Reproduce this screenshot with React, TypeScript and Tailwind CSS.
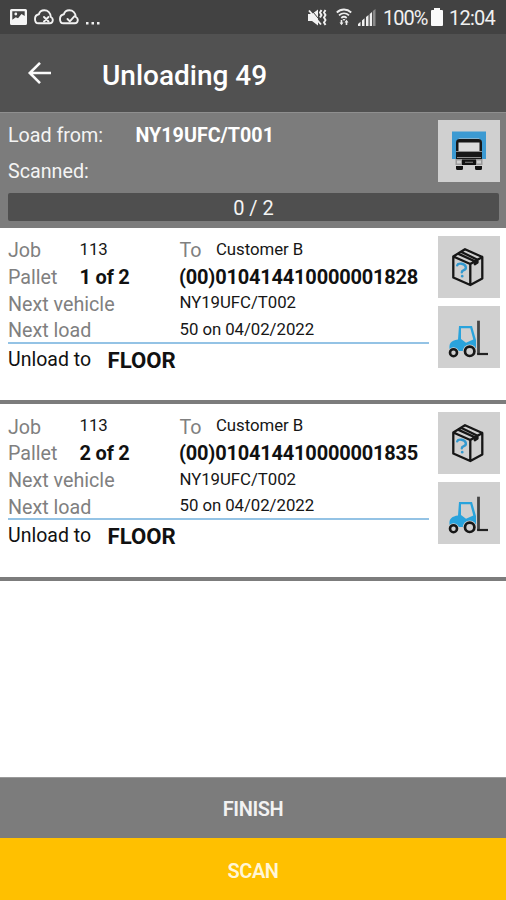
import type { ReactNode } from "react";

type Pallet = { job: string; index: string; customer: string; sscc: string; vehicle: string; load: string; target: string };

const pallets: Pallet[] = [
  { job: "113", index: "1 of 2", customer: "Customer B", sscc: "(00)010414410000001828", vehicle: "NY19UFC/T002", load: "50 on 04/02/2022", target: "FLOOR" },
  { job: "113", index: "2 of 2", customer: "Customer B", sscc: "(00)010414410000001835", vehicle: "NY19UFC/T002", load: "50 on 04/02/2022", target: "FLOOR" },
];

function CloudIcon({ mark }: { mark: string }) {
  return (
    <svg width="20" height="16" viewBox="0 0 20 16" fill="none" stroke="#f2f2f2" strokeWidth="1.900" strokeLinecap="round" strokeLinejoin="round">
      <path d="M4.300 14.300h11.500a3.300 3.300 0 0 0 1-6.300C16.500 4.200 14 1.300 10.300 1.300 7.500 1.300 5.500 2.900 4.900 5.300 2.600 5.700 1 7.600 1 9.900c0 2.500 1.300 4.400 3.300 4.400z" />
      <path d={mark} />
    </svg>
  );
}

function StatusBar() {
  return (
    <div className="flex h-[34px] shrink-0 items-center bg-[#424242] pl-[10px] pr-[11px] text-[#f0f0f0]">
      <svg width="17" height="16" viewBox="0 0 17 16">
        <path fill="#f5f5f5" fillRule="evenodd" d="M1.500 0h14A1.500 1.500 0 0 1 17 1.500v13a1.500 1.500 0 0 1-1.500 1.500h-14A1.500 1.500 0 0 1 0 14.500v-13A1.500 1.500 0 0 1 1.500 0zM2.300 2.300v8.500l3.500-2.500 2.200 1L11.500 5l3.200 2V2.300z" />
        <circle cx="5.800" cy="5" r="1.400" fill="#f5f5f5" />
      </svg>
      <div className="ml-[7px] flex gap-[5px]">
        <CloudIcon mark="M10 8l4.500 4.500M14.500 8l-4.500 4.500" />
        <CloudIcon mark="M8.500 10l2.300 2.300 4.500-5" />
      </div>
      <svg className="ml-[6px]" width="16" height="16" viewBox="0 0 16 16" fill="#f0f0f0">
        <rect x="1" y="13" width="2.500" height="2.500" />
        <rect x="6.500" y="13" width="2.500" height="2.500" />
        <rect x="12" y="13" width="2.500" height="2.500" />
      </svg>
      <svg className="ml-auto" width="19" height="17" viewBox="0 0 19 17">
        <path fill="#f2f2f2" d="M0 5h4l6-4.500v16L4 12H0z" />
        <path stroke="#424242" strokeWidth="1" d="M3 .5l11.500 14" />
        <path fill="none" stroke="#f2f2f2" strokeWidth="1.900" d="M1 1.500l12 14M13.500 1l-1.500 2.500 1.500 2.500-1.500 2.500M17.500 1l-1.500 2.500 1.500 2.500-1.500 2.500 1.500 2.500-1.500 2.500 1.500 2.500" />
      </svg>
      <svg className="ml-[9px]" width="16" height="18" viewBox="0 0 16 18">
        <path fill="none" stroke="#ededed" strokeWidth="1.800" d="M.8 4.500C5 .5 11 .5 15.200 4.500M3 7.300c3-2.700 7-2.700 10 0M5.300 10c1.700-1.500 3.700-1.500 5.400 0" />
        <path fill="#ededed" d="M6.500 11h3L8 13zM3.500 14.500h1.200V12h1.600v2.500h1.200l-2 2.800zM8.500 14.500l2-2.800 2 2.800h-1.200V17H9.700v-2.500z" />
      </svg>
      <svg className="ml-[6px]" width="18" height="17" viewBox="0 0 18 17" fill="#f0f0f0">
        <path d="M0 17v-2l2.500-2.200V17zM4 17v-5.500l2.500-2.300V17zM8 17V8l2.500-2v11zM11.700 17V5l2.300-2v14z" />
        <path fill="#8a8a8a" d="M14.800 17V2L17.500 0v17z" />
      </svg>
      <span className="ml-[7px] w-[44px] whitespace-nowrap pt-px text-[20px] leading-none tracking-[-0.950px]">100%</span>
      <svg className="ml-[4px]" width="12" height="18" viewBox="0 0 12 18" fill="#fafafa">
        <path d="M3 0h6v2H11a1 1 0 0 1 1 1v14a1 1 0 0 1-1 1H1a1 1 0 0 1-1-1V3a1 1 0 0 1 1-1h2z" />
      </svg>
      <span className="ml-[6px] w-[46px] whitespace-nowrap pt-px text-[20px] leading-none tracking-[-0.750px]">12:04</span>
    </div>
  );
}

function TruckIcon() {
  return (
    <svg width="62" height="62" viewBox="0 0 62 62">
      <path fill="#3c9ad2" d="M14 11.500h34v27.500h-4V22l-3-3.500H21L18 22v17h-4z" />
      <path fill="#171717" d="M21.500 19h19a3.500 3.500 0 0 1 3.500 3.500V39H18V22.500a3.500 3.500 0 0 1 3.500-3.500z" />
      <path fill="#dcdcdc" d="M20.500 22.500h21v8.500h-21z" />
      <path stroke="#8d8d8d" strokeWidth="1" d="M19 37.500h24M18 31.500h26" />
      <path fill="#999" d="M17.500 39h27v6h-27z" />
      <path fill="#111" d="M24 39.500h14v5.500H24zM18 46h7v2.500a1.500 1.500 0 0 1-1.500 1.500h-4a1.500 1.500 0 0 1-1.500-1.500zM37 46h7v2.500a1.500 1.500 0 0 1-1.500 1.500h-4a1.500 1.500 0 0 1-1.500-1.500z" />
      <path fill="#d0d0d0" d="M19 40.500h4v3h-4zM39 40.500h4v3h-4z" />
      <path stroke="#777" strokeWidth="1.200" d="M27 42.300h8" />
    </svg>
  );
}

function BoxIcon() {
  return (
    <svg width="62" height="62" viewBox="0 0 62 62" fill="none" strokeLinejoin="round" strokeLinecap="round">
      <path stroke="#161616" strokeWidth="2.300" d="M15.300 20.500L27 13.200 44.300 21V42.500L32.300 49 15.300 41.500zM15.300 20.500L32.300 28V49M32.300 28L44.300 21M20 17.600L36.800 25.300v3l2.700-1.800V23.700L23.500 16" />
      <path stroke="#3299d0" strokeWidth="2.400" d="M19.200 29.300c1-2.800 7.800-1.800 8.600 1.700 .9 3.900-4 2.200-4 5.200" />
      <path stroke="#3299d0" strokeWidth="2.600" d="M24.200 40v.3" />
    </svg>
  );
}

function ForkliftIcon() {
  return (
    <svg width="62" height="62" viewBox="0 0 62 62">
      <path fill="#29a3dc" fillRule="evenodd" d="M21 20h13l4 14v11H12c-1.800-7 .5-10.500 8-11.500zM23 22.300V33l5 3.700 7.300-3.200-3-11.200z" />
      <circle cx="15.500" cy="46.700" r="5.500" fill="#d0d0d0" />
      <circle cx="31.700" cy="45.300" r="6.900" fill="#d0d0d0" />
      <circle cx="15.500" cy="46.700" r="3.500" fill="none" stroke="#171717" strokeWidth="2.600" />
      <circle cx="31.700" cy="45.300" r="4.700" fill="none" stroke="#171717" strokeWidth="2.700" />
      <path fill="none" stroke="#444" strokeWidth="2.800" d="M40.500 14.700V48" />
      <path fill="none" stroke="#222" strokeWidth="2.200" d="M39.100 48H50" />
    </svg>
  );
}

function IconButton({ label, children }: { label: string; children: ReactNode }) {
  return (
    <button aria-label={label} className="h-[62px] w-[62px] shrink-0 bg-[#d0d0d0]">
      {children}
    </button>
  );
}

function PalletCard({ pallet }: { pallet: Pallet }) {
  const label = "text-[19.700px] text-[#808080]";
  const value = "text-[16.800px] tracking-[-0.050px] text-[#161616] -mt-[1.500px] self-start";
  const strong = "text-[20px] font-bold tracking-[-0.200px] text-[#111]";
  return (
    <section className="flex h-[176.500px] shrink-0 border-b-[4px] border-[#7c7c7c] bg-white pl-2 pr-[6px] pt-[8px]">
      <div className="w-[421px]">
        <div className="h-[108px] border-b-2 border-[#94c3e5] pt-[1.800px] [&>div]:flex [&>div]:h-[26.650px] [&>div]:items-baseline [&>div]:whitespace-nowrap [&>div]:leading-[27px]">
          <div>
            <span className={`w-[71.500px] ${label}`}>Job</span>
            <span className={`w-[100px] ${value}`}>{pallet.job}</span>
            <span className={`w-[36.500px] ${label}`}>To</span>
            <span className={value}>{pallet.customer}</span>
          </div>
          <div>
            <span className={`w-[71.500px] ${label}`}>Pallet</span>
            <span className={`w-[99.500px] ${strong}`}>{pallet.index}</span>
            <span className={strong}>{pallet.sscc}</span>
          </div>
          <div>
            <span className={`w-[171.500px] ${label}`}>Next vehicle</span>
            <span className={value}>{pallet.vehicle}</span>
          </div>
          <div>
            <span className={`w-[171.500px] ${label}`}>Next load</span>
            <span className={value}>{pallet.load}</span>
          </div>
        </div>
        <div className="flex whitespace-nowrap text-[#111]">
          <span className="w-[99.500px] pt-[3px] text-[19.500px] leading-[26px]">Unload to</span>
          <span className="pt-[3px] text-[22.200px] font-bold leading-[26px]">{pallet.target}</span>
        </div>
      </div>
      <div className="ml-auto flex flex-col gap-[8px]">
        <IconButton label="Pallet contents"><BoxIcon /></IconButton>
        <IconButton label="Unload pallet"><ForkliftIcon /></IconButton>
      </div>
    </section>
  );
}

export default function App() {
  return (
    <main className="flex h-[900px] w-[506px] flex-col overflow-hidden bg-white font-[Roboto,sans-serif]">
      <StatusBar />
      <header className="flex h-[78px] shrink-0 items-center bg-[#515151] pl-[27px] text-white">
        <svg width="25" height="24" viewBox="0 0 25 24" fill="none" stroke="#fafafa" strokeWidth="2.600">
          <path d="M24 12H3M13 1.800L2.800 12 13 22.200" />
        </svg>
        <h1 className="ml-[50px] pt-[6px] text-[28px] font-medium leading-[32px]">Unloading 49</h1>
      </header>
      <section className="flex h-[115.500px] shrink-0 flex-col border-t border-[#8f8f8f] bg-[#7c7c7c] pl-2 pr-[6px] pt-[7px] text-[#f4f4f4]">
        <div className="flex h-[73px] justify-between">
          <div className="pt-[2px] text-[19.700px] leading-[28px]">
            <div className="flex whitespace-nowrap">
              <span className="w-[127.500px]">Load from:</span>
              <span className="font-bold text-white">NY19UFC/T001</span>
            </div>
            <div className="pt-[8px]">Scanned:</div>
          </div>
          <IconButton label="Vehicle"><TruckIcon /></IconButton>
        </div>
        <div className="mr-px flex h-[28px] items-center justify-center rounded-[2px] bg-[#4f4f4f] pt-[2px] text-[20px]">0 / 2</div>
      </section>
      {pallets.map((pallet) => (
        <PalletCard key={pallet.sscc} pallet={pallet} />
      ))}
      <footer className="mt-auto shrink-0 text-center text-[20px] font-semibold tracking-[-0.400px]">
        <button className="block h-[61px] w-full border-t border-[#9a9a9a] bg-[#7c7c7c] pt-px text-[#f2f2f2]">FINISH</button>
        <button className="block h-[62px] w-full bg-[#ffc000] pt-[3px] text-[#fff6d8]">SCAN</button>
      </footer>
    </main>
  );
}
